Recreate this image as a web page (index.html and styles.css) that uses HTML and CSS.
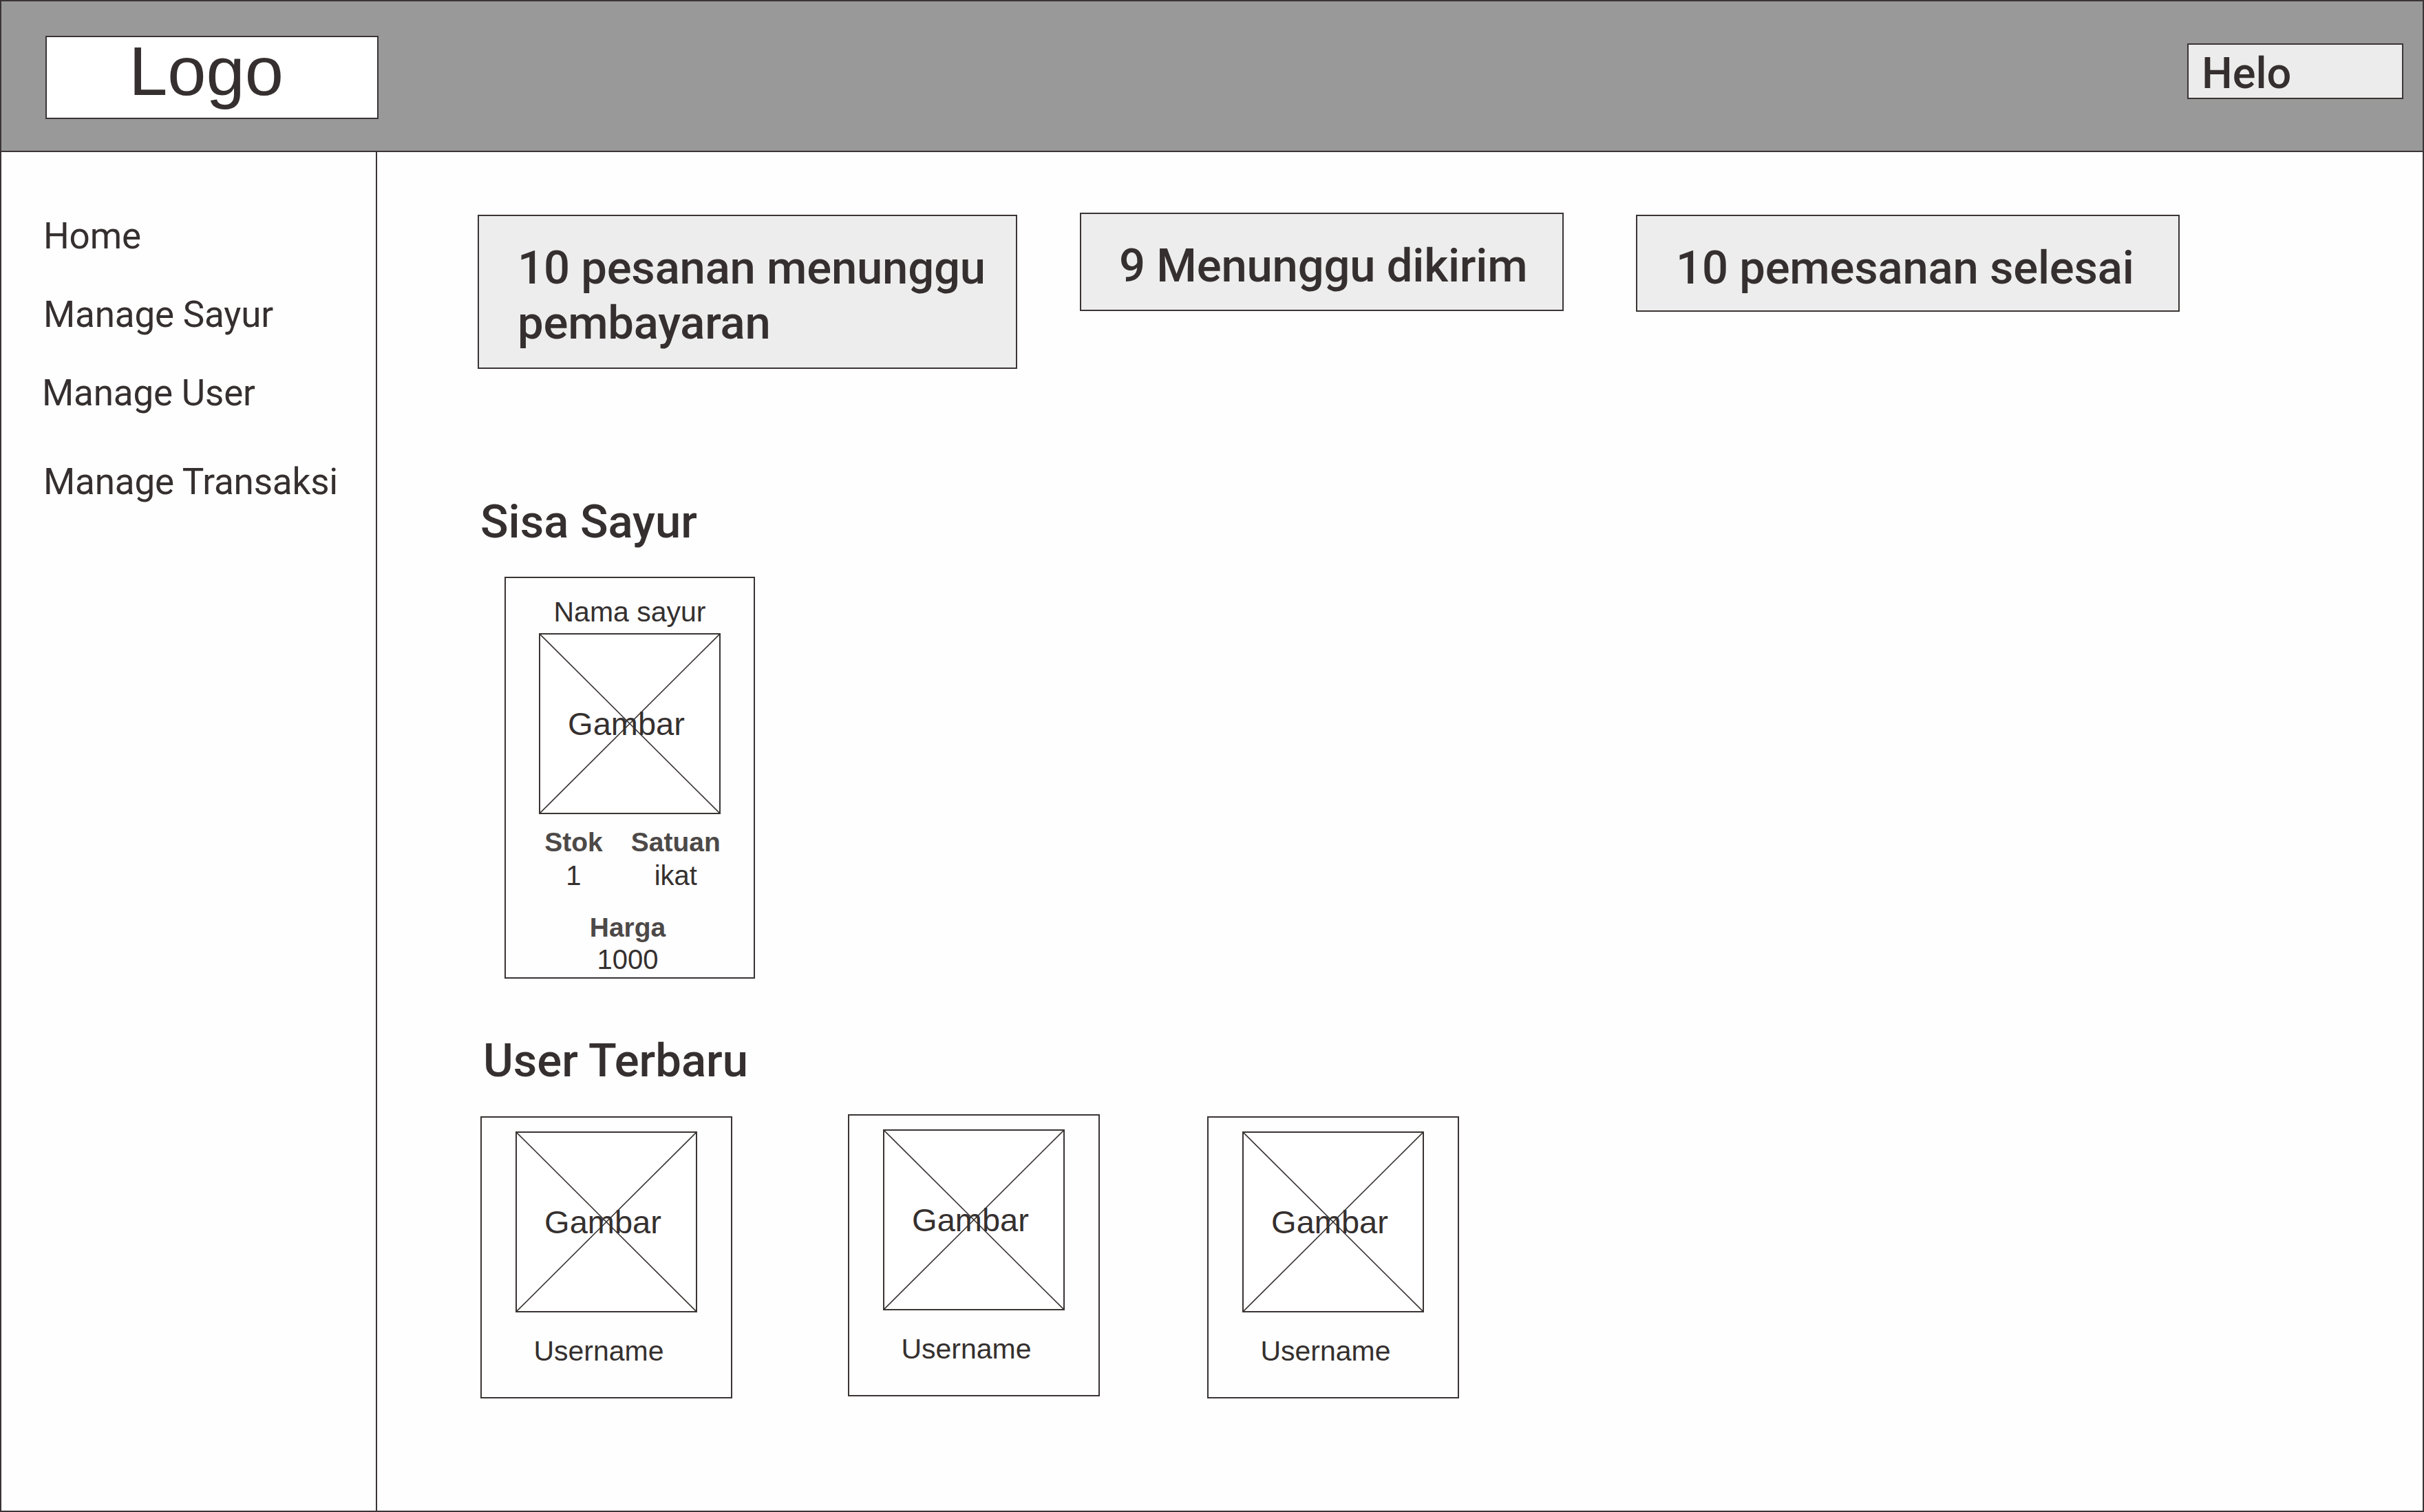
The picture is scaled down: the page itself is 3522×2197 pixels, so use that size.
FILE: index.html
```html
<!DOCTYPE html>
<html lang="id">
<head>
<meta charset="utf-8">
<title>Dashboard</title>
<link rel="stylesheet" href="styles.css">
</head>
<body>
<div class="frame">
  <header class="topbar">
    <div class="logo">Logo</div>
    <div class="greet">Helo</div>
  </header>
  <div class="body-row">
    <nav class="sidebar">
      <a class="nav-item">Home</a>
      <a class="nav-item">Manage Sayur</a>
      <a class="nav-item nav-item--user">Manage User</a>
      <a class="nav-item nav-item--last">Manage Transaksi</a>
    </nav>
    <main class="content">
      <div class="stats">
        <div class="stat stat--wide">10 pesanan menunggu<br>pembayaran</div>
        <div class="stat stat--ship">9 Menunggu dikirim</div>
        <div class="stat stat--done">10 pemesanan selesai</div>
      </div>

      <h2 class="section-title section-title--sayur">Sisa Sayur</h2>
      <div class="veg-card">
        <div class="veg-name">Nama sayur</div>
        <div class="placeholder">
          <svg class="cross" viewBox="0 0 100 100" preserveAspectRatio="none"><line x1="0" y1="0" x2="100" y2="100"/><line x1="100" y1="0" x2="0" y2="100"/></svg>
          <span class="placeholder-text">Gambar</span>
        </div>
        <div class="veg-meta">
          <div class="meta-col"><div class="meta-label">Stok</div><div class="meta-value">1</div></div>
          <div class="meta-col"><div class="meta-label">Satuan</div><div class="meta-value">ikat</div></div>
        </div>
        <div class="veg-price"><div class="meta-label">Harga</div><div class="meta-value">1000</div></div>
      </div>

      <h2 class="section-title section-title--users">User Terbaru</h2>
      <div class="users">
        <div class="user-card">
          <div class="placeholder">
            <svg class="cross" viewBox="0 0 100 100" preserveAspectRatio="none"><line x1="0" y1="0" x2="100" y2="100"/><line x1="100" y1="0" x2="0" y2="100"/></svg>
            <span class="placeholder-text">Gambar</span>
          </div>
          <div class="username">Username</div>
        </div>
        <div class="user-card user-card--second">
          <div class="placeholder">
            <svg class="cross" viewBox="0 0 100 100" preserveAspectRatio="none"><line x1="0" y1="0" x2="100" y2="100"/><line x1="100" y1="0" x2="0" y2="100"/></svg>
            <span class="placeholder-text">Gambar</span>
          </div>
          <div class="username">Username</div>
        </div>
        <div class="user-card user-card--third">
          <div class="placeholder">
            <svg class="cross" viewBox="0 0 100 100" preserveAspectRatio="none"><line x1="0" y1="0" x2="100" y2="100"/><line x1="100" y1="0" x2="0" y2="100"/></svg>
            <span class="placeholder-text">Gambar</span>
          </div>
          <div class="username">Username</div>
        </div>
      </div>
    </main>
  </div>
</div>
</body>
</html>
```

FILE: styles.css
```css
* { box-sizing: border-box; }

html, body {
  margin: 0;
  padding: 0;
  background: #ffffff;
}

body {
  color: #35302f;
  font-family: "Roboto", "Liberation Sans", sans-serif;
}

.frame {
  width: 3522px;
  height: 2197px;
  border: 2px solid #3a3534;
  display: flex;
  flex-direction: column;
  background: #fefefe;
}

/* ---------- top bar ---------- */
.topbar {
  height: 219px;
  flex: 0 0 auto;
  background: #999999;
  border-bottom: 2px solid #3a3534;
  display: flex;
  justify-content: space-between;
  align-items: flex-start;
  padding: 50px 28px 0 64px;
}

.logo {
  width: 484px;
  height: 121px;
  background: #ffffff;
  border: 2px solid #3a3534;
  font-family: "Liberation Sans", Arial, sans-serif;
  font-size: 101px;
  line-height: 99px;
  text-align: center;
  padding-right: 17px;
  color: #35302f;
}

.greet {
  width: 314px;
  height: 81px;
  margin-top: 11px;
  background: #edecec;
  border: 2px solid #3a3534;
  font-family: "Roboto", sans-serif;
  font-weight: 500;
  font-size: 63px;
  line-height: 83px;
  padding-left: 19px;
  color: #35302f;
}

/* ---------- body ---------- */
.body-row {
  flex: 1 1 auto;
  display: flex;
  min-height: 0;
}

.sidebar {
  width: 546px;
  flex: 0 0 auto;
  border-right: 2px solid #3a3534;
  padding: 91px 0 0 61px;
  display: flex;
  flex-direction: column;
  gap: 52px;
}

.nav-item {
  display: block;
  font-family: "Roboto", sans-serif;
  font-size: 53px;
  line-height: 62px;
  letter-spacing: -0.2px;
  color: #35302f;
  text-decoration: none;
}

.nav-item--user { margin-left: -2px; }
.nav-item--last { margin-top: 15px; }

.content {
  flex: 1 1 auto;
  padding: 91px 0 0 146px;
}

/* ---------- stats ---------- */
.stats {
  display: flex;
  align-items: flex-start;
}

.stat {
  background: #ededed;
  border: 2px solid #3a3534;
  font-family: "Roboto", sans-serif;
  font-weight: 500;
  font-size: 67px;
  line-height: 80px;
  letter-spacing: -0.2px;
  padding: 35px 0 0 56px;
  color: #35302f;
  white-space: nowrap;
}

.stat--wide { width: 784px; height: 224px; }
.stat--ship { width: 703px; height: 143px; margin-left: 91px; margin-top: -3px; padding-left: 55px; }
.stat--done { width: 790px; height: 141px; margin-left: 105px; }

/* ---------- section titles ---------- */
.section-title {
  margin: 0;
  font-family: "Roboto", sans-serif;
  font-weight: 500;
  font-size: 67px;
  line-height: 80px;
  padding-left: 4px;
  color: #35302f;
}

.section-title--sayur { margin-top: 182px; }
.section-title--users { margin-top: 79px; padding-left: 8px; }

/* ---------- placeholder image ---------- */
.placeholder {
  position: relative;
  width: 264px;
  height: 263px;
  border: 2px solid #3a3534;
  display: flex;
  align-items: center;
  justify-content: center;
  background: #ffffff;
}

.cross {
  position: absolute;
  inset: 0;
  width: 100%;
  height: 100%;
}

.cross line {
  stroke: #3a3534;
  stroke-width: 1.6;
  vector-effect: non-scaling-stroke;
}

.placeholder-text {
  position: relative;
  font-family: "Liberation Sans", Arial, sans-serif;
  font-size: 47px;
  color: #35302f;
  margin-right: 10px;
}

/* ---------- vegetable card ---------- */
.veg-card {
  width: 364px;
  height: 584px;
  margin: 40px 0 0 39px;
  border: 2px solid #3a3534;
  display: flex;
  flex-direction: column;
  align-items: center;
  padding-top: 27px;
  font-family: "Liberation Sans", Arial, sans-serif;
}

.veg-name {
  font-size: 41px;
  line-height: 45px;
  margin-bottom: 8px;
}

.veg-meta {
  display: flex;
  gap: 41px;
  margin-top: 16px;
  margin-left: 8px;
}

.meta-col {
  text-align: center;
  line-height: 49px;
}

.meta-label {
  font-weight: 700;
  font-size: 39px;
  color: #4d4948;
}

.meta-value {
  font-size: 40px;
  color: #35302f;
}

.veg-price {
  text-align: center;
  line-height: 46px;
  margin-top: 28px;
  margin-right: 6px;
}

/* ---------- users ---------- */
.users {
  display: flex;
  margin: 41px 0 0 4px;
}

.user-card {
  width: 366px;
  height: 410px;
  border: 2px solid #3a3534;
  display: flex;
  flex-direction: column;
  align-items: center;
  padding-top: 20px;
}

.user-card--second { margin-left: 168px; margin-top: -3px; }
.user-card--third { margin-left: 156px; }

.username {
  font-family: "Liberation Sans", Arial, sans-serif;
  font-size: 41px;
  margin-top: 33px;
  margin-right: 22px;
  color: #35302f;
}
```
